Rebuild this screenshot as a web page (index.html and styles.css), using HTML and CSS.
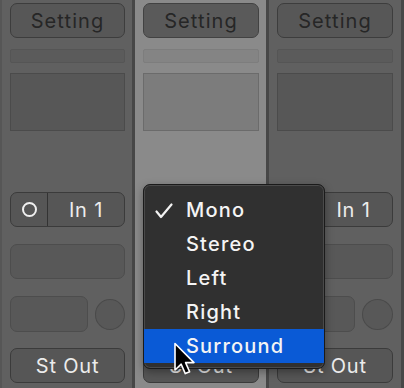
FILE: index.html
```html
<!DOCTYPE html>
<html>
<head>
<meta charset="utf-8">
<link rel="stylesheet" href="styles.css">
</head>
<body>
<div class="mixer">
  <div class="strip strip-first">
    <div class="setting">Setting</div>
    <div class="bar"></div>
    <div class="box"></div>
    <div class="spacer"></div>
    <div class="input"><span class="mode"><span class="ring"></span></span><span class="label">In 1</span></div>
    <div class="slot"></div>
    <div class="row"><div class="pad"></div><div class="knob"></div></div>
    <div class="output">St Out</div>
  </div>
  <div class="strip strip-sel">
    <div class="setting">Setting</div>
    <div class="bar"></div>
    <div class="box"></div>
    <div class="spacer"></div>
    <div class="input"><span class="mode"><span class="ring"></span></span><span class="label">In 1</span></div>
    <div class="slot"></div>
    <div class="row"><div class="pad"></div><div class="knob"></div></div>
    <div class="output">St Out</div>
  </div>
  <div class="strip strip-last">
    <div class="setting">Setting</div>
    <div class="bar"></div>
    <div class="box"></div>
    <div class="spacer"></div>
    <div class="input"><span class="mode"><span class="ring"></span></span><span class="label">In 1</span></div>
    <div class="slot"></div>
    <div class="row"><div class="pad"></div><div class="knob"></div></div>
    <div class="output">St Out</div>
  </div>
</div>

<div class="menu">
  <div class="item"><svg class="check" width="18" height="16" viewBox="0 0 18 16"><path d="M1.5 8.5 L6 14 L16.5 1.5" fill="none" stroke="#f2f2f2" stroke-width="2.2" stroke-linecap="round" stroke-linejoin="round"/></svg><span>Mono</span></div>
  <div class="item"><span>Stereo</span></div>
  <div class="item"><span>Left</span></div>
  <div class="item"><span>Right</span></div>
  <div class="item item-active"><span>Surround</span></div>
</div>

<svg class="cursor" width="24" height="36" viewBox="0 0 24 36">
  <path d="M2 1.5 L2 28 L8.2 22.2 L12.3 31.6 L16.6 29.8 L12.6 20.6 L21 20.6 Z" fill="#000" stroke="#fff" stroke-width="1.6" stroke-linejoin="round"/>
</svg>
</body>
</html>
```

FILE: styles.css
```css
html, body {
  margin: 0;
  padding: 0;
}
body {
  width: 404px;
  height: 388px;
  overflow: hidden;
  background: #464646;
  font-family: Inter, "Noto Sans", sans-serif;
  position: relative;
}
.mixer {
  display: flex;
  height: 388px;
}
.strip {
  display: flex;
  flex-direction: column;
  box-sizing: border-box;
  height: 388px;
  padding-top: 3px;
  background: #606060;
  border-right: 3px solid #474747;
}
.strip-first {
  width: 135px;
  padding-left: 10px;
  padding-right: 7px;
  box-shadow: inset 2px 0 0 #565656;
}
.strip-sel {
  width: 134px;
  padding-left: 8px;
  padding-right: 7px;
  background: #8a8a8a;
}
.strip-last {
  width: 135px;
  padding-left: 8px;
  padding-right: 8px;
}
.setting {
  height: 35px;
  box-sizing: border-box;
  border: 1px solid #3d3d3d;
  border-radius: 7px;
  background: #575757;
  color: #262626;
  font-size: 20px;
  letter-spacing: 1.1px;
  display: flex;
  align-items: center;
  justify-content: center;
}
.strip-sel .setting {
  background: #5a5a5a;
  border-color: #424242;
}
.bar {
  margin-top: 11px;
  height: 14px;
  box-sizing: border-box;
  border: 1px solid #555555;
  border-radius: 2px;
  background: #5b5b5b;
}
.strip-sel .bar {
  background: #848484;
  border-color: #7d7d7d;
}
.box {
  margin-top: 10px;
  height: 58px;
  box-sizing: border-box;
  border: 1px solid #4b4b4b;
  background: #575757;
}
.strip-sel .box {
  background: #7c7c7c;
  border-color: #6b6b6b;
}
.spacer {
  height: 61px;
}
.input, .output {
  height: 35px;
  box-sizing: border-box;
  border: 1px solid #3b3b3b;
  border-radius: 7px;
  background: #565656;
  color: #ececec;
  font-size: 20px;
  letter-spacing: 0.8px;
}
.input {
  display: flex;
}
.mode {
  width: 36px;
  border-right: 1px solid #333333;
  display: flex;
  align-items: center;
  justify-content: center;
}
.ring {
  width: 11px;
  height: 11px;
  border: 2px solid #f0f0f0;
  border-radius: 50%;
}
.label {
  flex: 1;
  display: flex;
  align-items: center;
  justify-content: center;
}
.slot {
  margin-top: 17px;
  height: 35px;
  box-sizing: border-box;
  border: 1px solid #4d4d4d;
  border-radius: 7px;
  background: #585858;
}
.row {
  margin-top: 17px;
  height: 36px;
  display: flex;
  align-items: center;
  gap: 7px;
}
.pad {
  width: 79px;
  height: 36px;
  box-sizing: border-box;
  border: 1px solid #4d4d4d;
  border-radius: 7px;
  background: #585858;
}
.knob {
  width: 31px;
  height: 31px;
  box-sizing: border-box;
  border: 1px solid #4a4a4a;
  border-radius: 50%;
  background: #585858;
}
.output {
  margin-top: 16px;
  display: flex;
  align-items: center;
  justify-content: center;
}
.menu {
  position: absolute;
  left: 143px;
  top: 184px;
  width: 182px;
  height: 185px;
  box-sizing: border-box;
  padding: 8px 0 5px;
  background: #303030;
  border: 1px solid #1a1a1a;
  border-radius: 7px;
  box-shadow: inset 0 0 0 1px #4a4a4a, 0 3px 8px rgba(0, 0, 0, 0.35);
  overflow: hidden;
}
.item {
  position: relative;
  height: 34px;
  display: flex;
  align-items: center;
  padding-left: 42px;
  color: #f4f4f4;
  font-size: 20px;
  font-weight: 500;
  letter-spacing: 1.2px;
}
.item-active {
  background: #0a5ad6;
}
.check {
  position: absolute;
  left: 11px;
  top: 10px;
}
.cursor {
  position: absolute;
  left: 173px;
  top: 342px;
}
```
